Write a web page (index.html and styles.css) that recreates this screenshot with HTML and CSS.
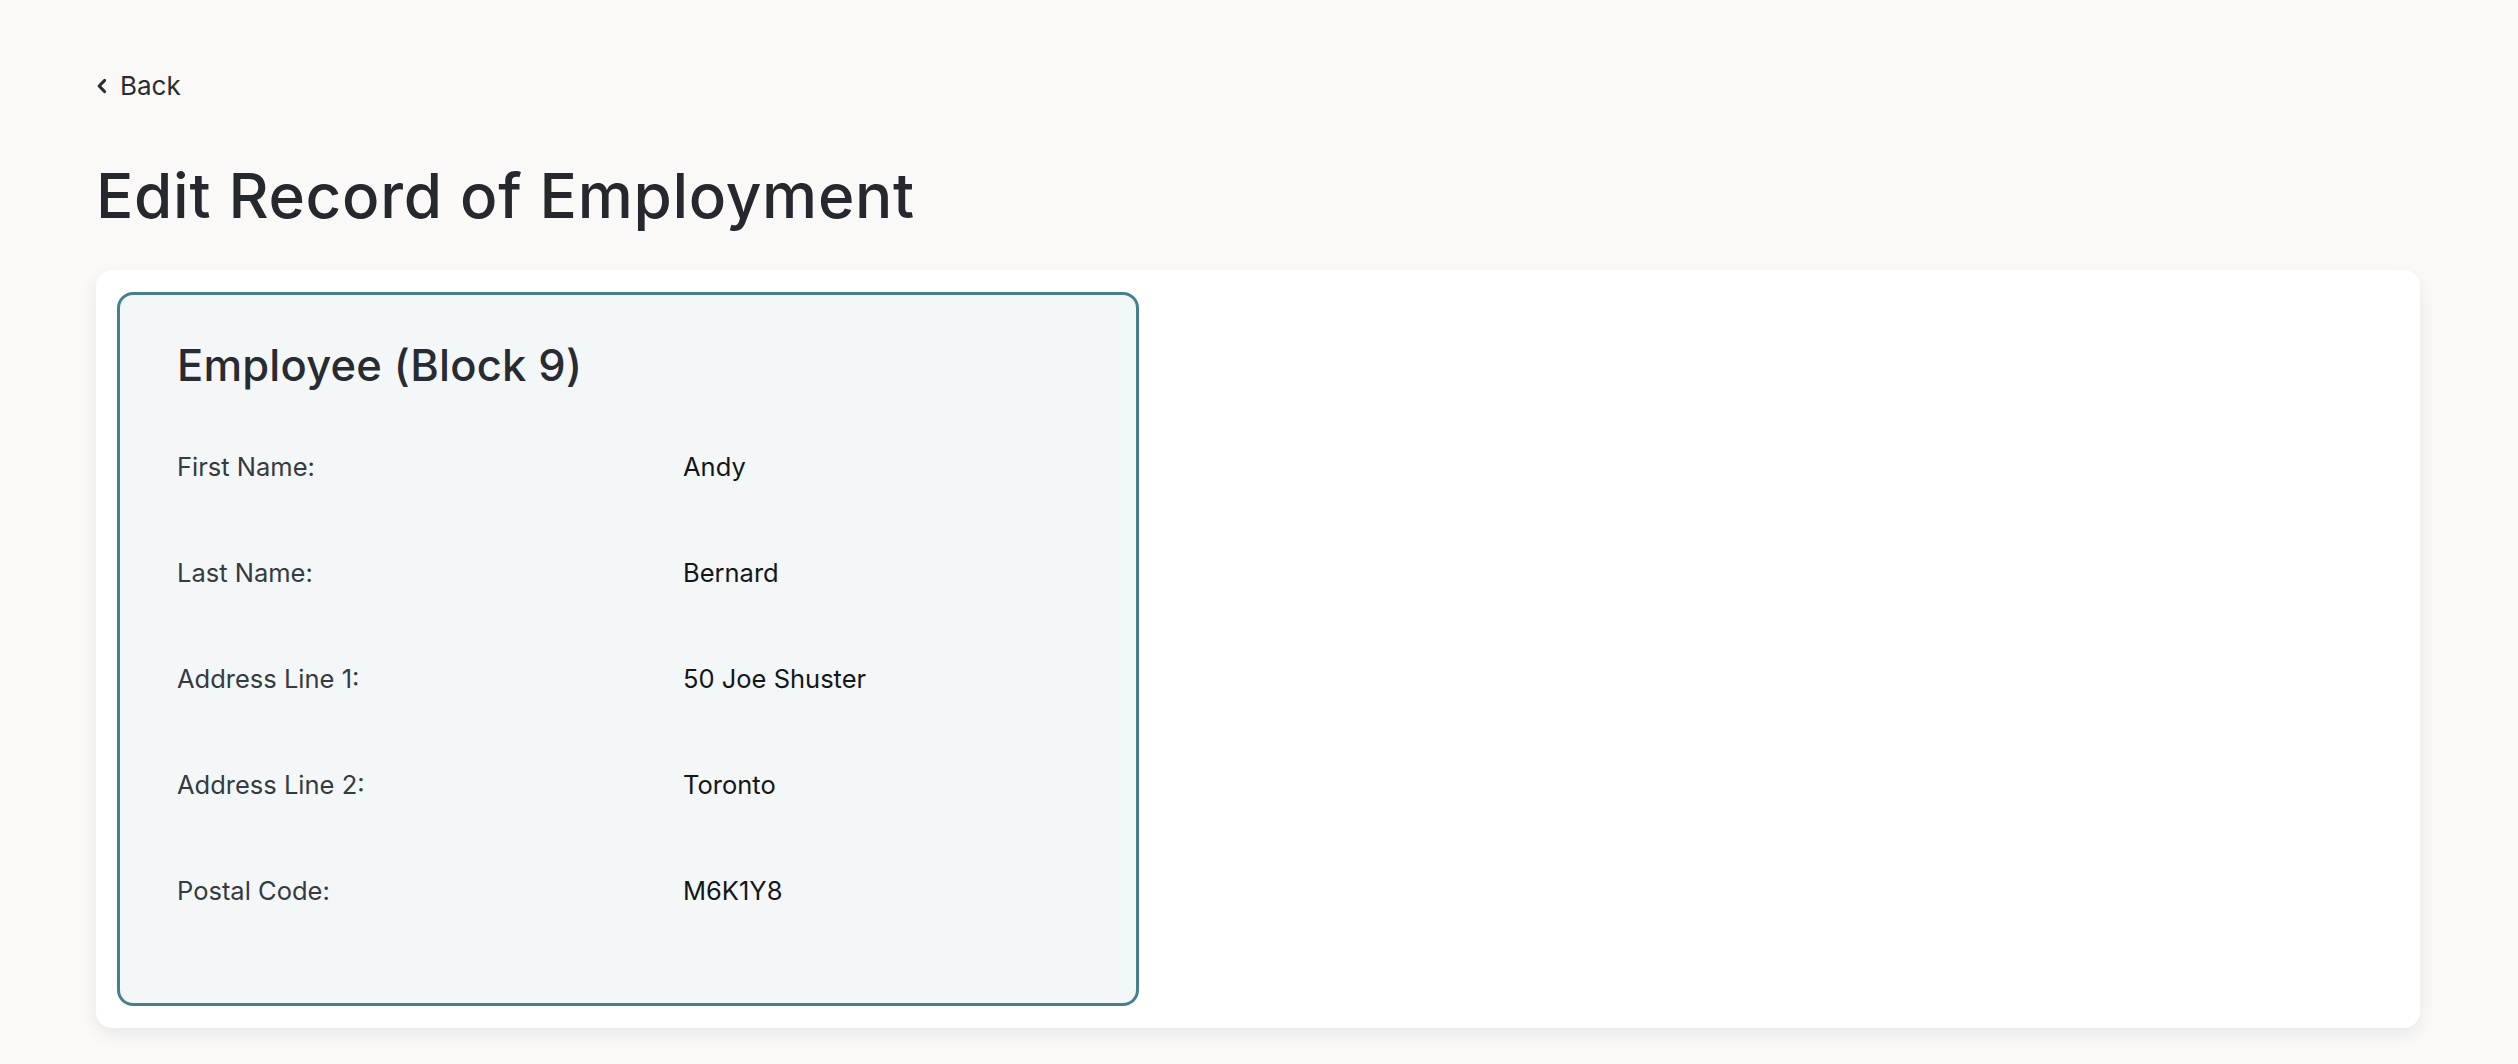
FILE: index.html
```html
<!DOCTYPE html>
<html lang="en">
<head>
<meta charset="utf-8">
<title>Edit Record of Employment</title>
<link rel="stylesheet" href="styles.css">
</head>
<body>
<main class="page">
  <a class="back" href="#">
    <svg class="back-icon" width="12" height="18" viewBox="0 0 12 18" aria-hidden="true">
      <polyline points="8.5,3.5 3.2,9 8.5,14.5" fill="none" stroke="#2a2c31" stroke-width="3.2" stroke-linecap="round" stroke-linejoin="round"/>
    </svg>
    <span>Back</span>
  </a>
  <h1 class="title">Edit Record of Employment</h1>
  <section class="card">
    <div class="panel">
      <h2 class="panel-title">Employee (Block 9)</h2>
      <dl class="rows">
        <div class="row"><dt>First Name:</dt><dd>Andy</dd></div>
        <div class="row"><dt>Last Name:</dt><dd>Bernard</dd></div>
        <div class="row"><dt>Address Line 1:</dt><dd>50 Joe Shuster</dd></div>
        <div class="row"><dt>Address Line 2:</dt><dd>Toronto</dd></div>
        <div class="row"><dt>Postal Code:</dt><dd>M6K1Y8</dd></div>
      </dl>
    </div>
  </section>
</main>
</body>
</html>
```

FILE: styles.css
```css
* { box-sizing: border-box; }
html, body {
  margin: 0;
  padding: 0;
  background: #faf9f7;
  font-family: Inter, "Noto Sans", "Liberation Sans", sans-serif;
  color: #28292e;
}
.page {
  padding: 70px 98px 38px 96px;
  display: flex;
  flex-direction: column;
  align-items: flex-start;
}
.back {
  display: flex;
  align-items: center;
  gap: 12px;
  font-size: 26px;
  line-height: 32px;
  color: #2a2c31;
  text-decoration: none;
}
.back-icon { display: block; }
.title {
  margin: 56px 0 0 0;
  font-size: 62px;
  line-height: 75px;
  font-weight: 500;
  letter-spacing: 0.7px;
  color: #27282d;
}
.card {
  margin-top: 37px;
  align-self: stretch;
  background: #ffffff;
  border-radius: 16px;
  box-shadow: 0 6px 18px rgba(0, 0, 0, 0.07);
  padding: 22px 21px 22px 21px;
}
.panel {
  width: 1022px;
  background: #f3f7f8;
  border: 3px solid #46808d;
  border-radius: 16px;
  padding: 44px 40px 94px 57px;
}
.panel-title {
  margin: 0;
  font-size: 43.5px;
  line-height: 53px;
  font-weight: 500;
  letter-spacing: 0.2px;
  color: #282b31;
}
.rows {
  margin: 57px 0 0 0;
  display: flex;
  flex-direction: column;
  gap: 70px;
}
.row {
  display: grid;
  grid-template-columns: 506px 1fr;
  font-size: 25.5px;
  line-height: 36px;
}
.row dt {
  margin: 0;
  color: #363a41;
}
.row dd {
  margin: 0;
  color: #141619;
}
```
